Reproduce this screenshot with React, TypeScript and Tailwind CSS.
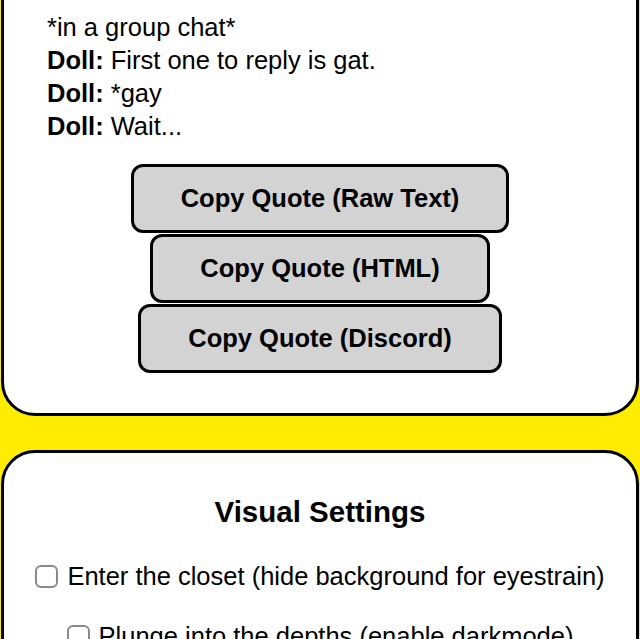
const quote = [
  { who: null, text: "*in a group chat*" },
  { who: "Doll:", text: "First one to reply is gat." },
  { who: "Doll:", text: "*gay" },
  { who: "Doll:", text: "Wait..." },
];

const buttons = ["Copy Quote (Raw Text)", "Copy Quote (HTML)", "Copy Quote (Discord)"];

const settings = [
  "Enter the closet (hide background for eyestrain)",
  "Plunge into the depths (enable darkmode)",
];

function Card({ children, className = "" }: { children: React.ReactNode; className?: string }) {
  return (
    <section className={`mx-px rounded-[34px] border-[3px] border-black bg-white ${className}`}>
      {children}
    </section>
  );
}

export default function App() {
  return (
    <div
      className="h-[639px] overflow-hidden bg-[#ffec00] text-black"
      style={{ fontFamily: '"Liberation Sans", Arial, sans-serif' }}
    >
      <div className="-mt-[40px] flex flex-col gap-[34px]">
        <Card className="px-[43px] pt-[48px] pb-[40px]">
          <div className="text-[25.5px] leading-[33px]">
            {quote.map((line, i) => (
              <p key={i}>
                {line.who && <b>{line.who} </b>}
                {line.text}
              </p>
            ))}
          </div>

          <div className="mt-[21px] flex flex-col items-center gap-px">
            {buttons.map((label) => (
              <button
                key={label}
                type="button"
                className="h-[69px] rounded-[12px] border-[3px] border-black bg-[#d3d3d3] px-[47px] text-[25.5px] font-bold"
              >
                {label}
              </button>
            ))}
          </div>
        </Card>

        <Card className="h-[300px] pt-[40px]">
          <h2 className="text-center text-[29.5px] leading-[38px] font-bold">Visual Settings</h2>
          <div className="mt-[29px] flex flex-col items-center gap-[27px] text-[25.5px] leading-[33px]">
            {settings.map((s) => (
              <label key={s} className="flex items-center gap-[9px]">
                <span className="inline-block size-[23px] rounded-[6px] border-2 border-[#8a8a8a] bg-white" />
                {s}
              </label>
            ))}
          </div>
        </Card>
      </div>
    </div>
  );
}
